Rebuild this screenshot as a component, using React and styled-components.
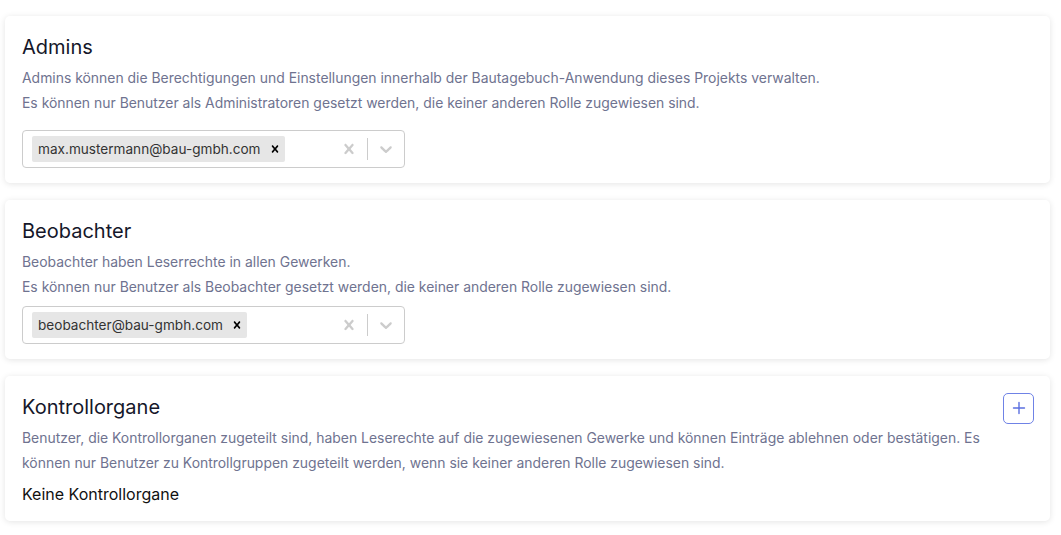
import React from "react";
import styled, { createGlobalStyle } from "styled-components";

const Global = createGlobalStyle`
  html, body { margin: 0; padding: 0; background: #ffffff; }
  body { font-family: Inter, "Noto Sans", Roboto, sans-serif; -webkit-font-smoothing: antialiased; }
  * { box-sizing: border-box; }
`;

const Page = styled.div`
  display: flex;
  flex-direction: column;
  gap: 17px;
  padding: 16px 11px 14px 5px;
`;

const Card = styled.section`
  background: #fff;
  border-radius: 5px;
  box-shadow: 0 1px 6px rgba(0, 0, 0, 0.11);
  padding: 16px 16px 15px 17px;
  display: flex;
  flex-direction: column;
`;

const Header = styled.div`
  display: flex;
  align-items: center;
  justify-content: space-between;
  height: 30px;
`;

const Title = styled.h2`
  margin: 0;
  font-size: 20px;
  line-height: 30px;
  font-weight: 400;
  color: #15172a;
`;

const Desc = styled.div`
  margin-top: 4px;
  padding-right: 24px;
  font-size: 13.93px;
  line-height: 25px;
  color: #6f7390;
  & p { margin: 0; }
`;

const Empty = styled.div`
  margin-top: 6px;
  font-size: 16px;
  line-height: 24px;
  color: #111;
`;

const AddButton = styled.button`
  width: 31px;
  height: 31px;
  margin: 2px 0 0 0;
  border: 1px solid #6f82e6;
  border-radius: 5px;
  background: #fff;
  color: #5b6fe0;
  display: flex;
  align-items: center;
  justify-content: center;
  padding: 0;
  cursor: pointer;
`;

const Select = styled.div`
  margin-top: ${(p) => p.$gap}px;
  width: 383px;
  height: 38px;
  border: 1px solid #cccccc;
  border-radius: 4px;
  display: flex;
  align-items: center;
  background: #fff;
`;

const ValueContainer = styled.div`
  flex: 1;
  display: flex;
  align-items: center;
  padding: 2px 7px;
  min-width: 0;
`;

const Chip = styled.div`
  display: flex;
  align-items: center;
  background: #e6e6e6;
  border-radius: 2px;
  height: 26px;
  margin: 2px;
`;

const ChipLabel = styled.span`
  font-size: 13.6px;
  color: #333;
  padding: 0 6px;
  line-height: 26px;
  white-space: nowrap;
`;

const ChipRemove = styled.span`
  display: flex;
  align-items: center;
  padding: 0 3px 0 1px;
  color: #000;
`;

const Indicators = styled.div`
  display: flex;
  align-items: center;
  height: 100%;
`;

const Indicator = styled.span`
  display: flex;
  align-items: center;
  padding: 8px;
  color: #cccccc;
`;

const Separator = styled.span`
  width: 1px;
  align-self: stretch;
  margin: 7px 0;
  background: #cccccc;
`;

const Cross = ({ size = 14 }) => (
  <svg width={size} height={size} viewBox="0 0 20 20" fill="currentColor">
    <path d="M14.348 14.849c-0.469 0.469-1.229 0.469-1.697 0l-2.651-3.030-2.651 3.029c-0.469 0.469-1.229 0.469-1.697 0-0.469-0.469-0.469-1.229 0-1.697l2.758-3.150-2.759-3.152c-0.469-0.469-0.469-1.228 0-1.697s1.228-0.469 1.697 0l2.652 3.031 2.651-3.031c0.469-0.469 1.228-0.469 1.697 0s0.469 1.229 0 1.697l-2.758 3.152 2.758 3.15c0.469 0.469 0.469 1.229 0 1.698z" />
  </svg>
);

const Chevron = () => (
  <svg width="20" height="20" viewBox="0 0 20 20" fill="currentColor">
    <path d="M4.516 7.548c0.436-0.446 1.043-0.481 1.576 0l3.908 3.747 3.908-3.747c0.533-0.481 1.141-0.446 1.574 0 0.436 0.445 0.408 1.197 0 1.615-0.406 0.418-4.695 4.502-4.695 4.502-0.217 0.223-0.502 0.335-0.787 0.335s-0.57-0.112-0.789-0.335c0 0-4.287-4.084-4.695-4.502s-0.436-1.17 0-1.615z" />
  </svg>
);

const Plus = () => (
  <svg width="14" height="14" viewBox="0 0 14 14" fill="none" stroke="currentColor" strokeWidth="1.4" strokeLinecap="round">
    <path d="M7 1.5v11M1.5 7h11" />
  </svg>
);

const MultiSelect = ({ value, gap }) => (
  <Select $gap={gap}>
    <ValueContainer>
      <Chip>
        <ChipLabel>{value}</ChipLabel>
        <ChipRemove>
          <Cross size={14} />
        </ChipRemove>
      </Chip>
    </ValueContainer>
    <Indicators>
      <Indicator>
        <Cross size={20} />
      </Indicator>
      <Separator />
      <Indicator>
        <Chevron />
      </Indicator>
    </Indicators>
  </Select>
);

export default function App() {
  return (
    <>
      <Global />
      <Page>
        <Card>
          <Header>
            <Title>Admins</Title>
          </Header>
          <Desc>
            <p>Admins können die Berechtigungen und Einstellungen innerhalb der Bautagebuch-Anwendung dieses Projekts verwalten.</p>
            <p>Es können nur Benutzer als Administratoren gesetzt werden, die keiner anderen Rolle zugewiesen sind.</p>
          </Desc>
          <MultiSelect value="max.mustermann@bau-gmbh.com" gap={14} />
        </Card>
        <Card>
          <Header>
            <Title>Beobachter</Title>
          </Header>
          <Desc>
            <p>Beobachter haben Leserrechte in allen Gewerken.</p>
            <p>Es können nur Benutzer als Beobachter gesetzt werden, die keiner anderen Rolle zugewiesen sind.</p>
          </Desc>
          <MultiSelect value="beobachter@bau-gmbh.com" gap={6} />
        </Card>
        <Card>
          <Header>
            <Title>Kontrollorgane</Title>
            <AddButton aria-label="Hinzufügen">
              <Plus />
            </AddButton>
          </Header>
          <Desc>
            <p>
              Benutzer, die Kontrollorganen zugeteilt sind, haben Leserechte auf die zugewiesenen Gewerke und können Einträge ablehnen oder bestätigen. Es können nur Benutzer zu Kontrollgruppen zugeteilt werden, wenn sie keiner anderen Rolle zugewiesen sind.
            </p>
          </Desc>
          <Empty>Keine Kontrollorgane</Empty>
        </Card>
      </Page>
    </>
  );
}
